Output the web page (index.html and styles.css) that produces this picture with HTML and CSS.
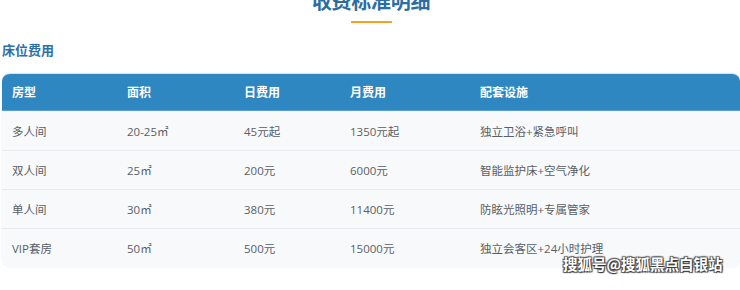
FILE: index.html
```html
<!DOCTYPE html>
<html lang="zh">
<head>
<meta charset="utf-8">
<link rel="stylesheet" href="styles.css">
</head>
<body>
<div class="page">
  <div class="heading">
    <h1 class="title">收费标准明细</h1>
    <div class="title-line"></div>
  </div>
  <h2 class="section">床位费用</h2>
  <div class="table">
    <div class="row head">
      <div>房型</div><div>面积</div><div>日费用</div><div>月费用</div><div>配套设施</div>
    </div>
    <div class="row">
      <div>多人间</div><div>20-25㎡</div><div>45元起</div><div>1350元起</div><div>独立卫浴+紧急呼叫</div>
    </div>
    <div class="row">
      <div>双人间</div><div>25㎡</div><div>200元</div><div>6000元</div><div>智能监护床+空气净化</div>
    </div>
    <div class="row">
      <div>单人间</div><div>30㎡</div><div>380元</div><div>11400元</div><div>防眩光照明+专属管家</div>
    </div>
    <div class="row">
      <div>VIP套房</div><div>50㎡</div><div>500元</div><div>15000元</div><div>独立会客区+24小时护理</div>
    </div>
  </div>
  <div class="watermark">搜狐号@搜狐黑点白银站</div>
</div>
</body>
</html>
```
FILE: styles.css
```css
* { box-sizing: border-box; }
html, body { margin: 0; padding: 0; background: #fff; }
body {
  font-family: "Open Sans", "Noto Sans CJK SC", sans-serif;
  width: 740px;
  height: 290px;
  overflow: hidden;
}
.page {
  position: relative;
  height: 290px;
  padding-left: 2px;
}
.heading {
  display: flex;
  flex-direction: column;
  align-items: center;
  margin-top: -9px;
}
.title {
  margin: 0;
  font-size: 20px;
  line-height: 20px;
  font-weight: 700;
  color: #2b6da3;
  font-family: "Noto Sans CJK SC", sans-serif;
  letter-spacing: -0.3px;
}
.title-line {
  width: 41px;
  height: 2px;
  background: #f4a124;
  margin-top: 10px;
}
.section {
  margin: 19px 0 0 0;
  font-size: 13px;
  line-height: 16px;
  font-weight: 700;
  color: #2d70a8;
  font-family: "Noto Sans CJK SC", sans-serif;
}
.table {
  margin-top: 15px;
  border-radius: 8px;
  overflow: hidden;
  background: #f7f9fb;
  box-shadow: 0 0 2px rgba(0, 0, 0, 0.08);
  border-top: 1px solid #d6e4ef;
}
.row {
  display: grid;
  grid-template-columns: 115px 117px 106px 130px 1fr;
  height: 39px;
  align-items: center;
  font-size: 11.5px;
  color: #595f66;
  border-top: 1px solid #e7ebef;
}
.row > div { padding-left: 10px; }
.row.head {
  height: 37px;
  border-top: none;
  background: #2e87c1;
  color: #fff;
  font-weight: 700;
  font-size: 12px;
  border-bottom: 1px solid #5b9dcc;
}
.row.head + .row { border-top: none; }
.watermark {
  position: absolute;
  left: 563px;
  top: 263px;
  font-size: 14.5px;
  line-height: 20px;
  font-weight: 700;
  color: #fff;
  font-family: "Noto Sans CJK SC", sans-serif;
  text-shadow: 1px 1px 1px #333, -1px -1px 1px #555, 1px -1px 1px #555, -1px 1px 1px #555;
}
```
